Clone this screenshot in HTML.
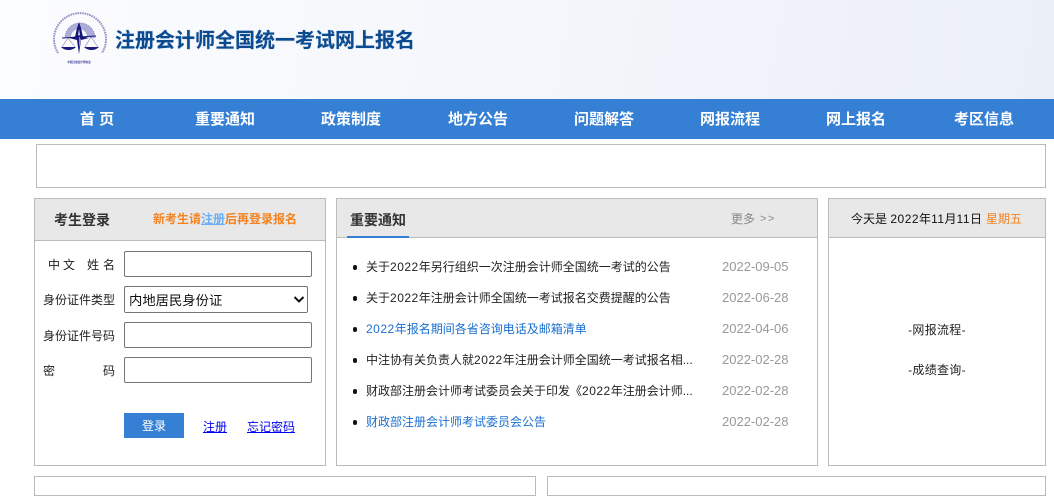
<!DOCTYPE html>
<html lang="zh">
<head>
<meta charset="utf-8">
<title>注册会计师全国统一考试网上报名</title>
<style>
html,body{margin:0;padding:0;background:#fff;}
body{width:1054px;height:478px;position:relative;overflow:hidden;font-family:"Liberation Sans","Noto Sans CJK SC",sans-serif;font-size:12px;color:#000;}
.a{position:absolute;white-space:nowrap;}
.box{position:absolute;box-sizing:border-box;border:1px solid #bbb;background:#fff;}
.head{position:absolute;box-sizing:border-box;background:#e8e8e8;border:1px solid #bbb;}
.nav{font-size:15px;font-weight:bold;color:#fff;top:110px;line-height:20px;width:100px;text-align:center;}
.lab{font-size:12px;line-height:18px;color:#222;}
.inp{position:absolute;box-sizing:border-box;left:124px;width:188px;height:26px;border:1px solid #767676;border-radius:2px;background:#fff;}
.li{left:366px;width:330px;overflow:hidden;font-size:12px;line-height:18px;color:#222;}
.li.b{color:#1a6fd0;}
.d{letter-spacing:.5px;}
.dot{position:absolute;left:352.5px;width:4.5px;height:4.5px;border-radius:50%;background:#111;}
.dt{left:722px;font-size:13px;line-height:18px;color:#999;}
</style>
</head>
<body>
<div class="a" style="left:0;top:0;width:1054px;height:99px;background:linear-gradient(100deg,#fbfcfe 0%,#f6f8fc 35%,#ebeff7 100%);"></div>
<svg class="a" style="left:51px;top:9px;" width="60" height="60" viewBox="0 0 60 60">
<rect width="60" height="60" fill="#fbfbfe"/>
<path d="M7 44A26 26 0 1 1 51 44" fill="none" stroke="#7d80c0" stroke-width="2" stroke-dasharray="1.6 .8" opacity=".85"/>
<path d="M14 29A15 15 0 0 1 44 29L36 28A8 8 0 0 0 20 28Z" fill="#9092cc" opacity=".75"/>
<path d="M14 29A15 15 0 0 1 44 29" fill="none" stroke="#7c7ec0" stroke-width=".8" stroke-dasharray="1 1"/>
<path d="M28 13L30 19L32 28L29 27L28 20L27 27L24 28L26 19Z" fill="#15157a"/>
<path d="M11 29L45 27" stroke="#1a1a80" stroke-width="1"/>
<path d="M18 29L26 27L28 26L30 27L38 29L30 31L28 45L26 31Z" fill="#15157a"/>
<path d="M28 27L30 31L28 39Z" fill="#eef" opacity=".6"/>
<path d="M17 29L11 38M17 29L24 38M40 28L34 38M40 28L47 38" stroke="#55559f" stroke-width=".5"/>
<path d="M10 38H25Q22 41 17.500 41Q13 41 10 38ZM33 38H48Q45 41 40.500 41Q36 41 33 38Z" fill="#1a1a80"/>
<text x="28" y="54" font-size="2.600" text-anchor="middle" fill="#3a3a90" font-family="Noto Sans CJK SC" font-weight="bold">中国注册会计师协会</text>
</svg>
<div class="a" style="left:115px;top:27px;font-size:20px;font-weight:bold;line-height:28px;color:#0b4a8e;text-shadow:0 0 1px rgba(60,120,190,.6);">注册会计师全国统一考试网上报名</div>

<div class="a" style="left:0;top:99px;width:1054px;height:40px;background:#3580d4;"></div>
<div class="a nav" style="left:47px;">首 页</div>
<div class="a nav" style="left:175px;">重要通知</div>
<div class="a nav" style="left:301px;">政策制度</div>
<div class="a nav" style="left:428px;">地方公告</div>
<div class="a nav" style="left:554px;">问题解答</div>
<div class="a nav" style="left:680px;">网报流程</div>
<div class="a nav" style="left:806px;">网上报名</div>
<div class="a nav" style="left:934px;">考区信息</div>

<div class="box" style="left:36px;top:144px;width:1010px;height:44px;"></div>

<!-- login -->
<div class="box" style="left:34px;top:198px;width:292px;height:268px;"></div>
<div class="head" style="left:34px;top:198px;width:292px;height:43px;"></div>
<div class="a" style="left:54px;top:210px;font-size:14px;line-height:20px;font-weight:bold;color:#333;">考生登录</div>
<div class="a" style="left:153px;top:210px;font-size:12px;line-height:18px;font-weight:bold;color:#f5821f;">新考生请<span style="color:#6aaef5;text-decoration:underline;">注册</span>后再登录报名</div>

<div class="a lab" style="left:48px;top:256px;">中</div>
<div class="a lab" style="left:63px;top:256px;">文</div>
<div class="a lab" style="left:87px;top:256px;">姓</div>
<div class="a lab" style="left:103px;top:256px;">名</div>
<div class="a lab" style="left:43px;top:291px;">身份证件类型</div>
<div class="a lab" style="left:43px;top:327px;">身份证件号码</div>
<div class="a lab" style="left:43px;top:362px;">密</div>
<div class="a lab" style="left:103px;top:362px;">码</div>

<div class="inp" style="top:251px;"></div>
<div class="inp" style="top:286px;width:184px;height:27px;"></div>
<div class="a" style="left:129px;top:291px;font-size:13.33px;line-height:19px;color:#111;">内地居民身份证</div>
<svg class="a" style="left:293px;top:295px;" width="12" height="9" viewBox="0 0 12 9"><path d="M1.500 2L6 6.500L10.500 2" fill="none" stroke="#111" stroke-width="2"/></svg>
<div class="inp" style="top:322px;"></div>
<div class="inp" style="top:357px;"></div>

<div class="a" style="left:124px;top:413px;width:60px;height:25px;background:#3580d4;color:#fff;text-align:center;font-size:12px;line-height:26px;">登录</div>
<div class="a" style="left:203px;top:418px;font-size:12px;line-height:18px;color:#00e;text-decoration:underline;">注册</div>
<div class="a" style="left:247px;top:418px;font-size:12px;line-height:18px;color:#00e;text-decoration:underline;">忘记密码</div>

<!-- notices -->
<div class="box" style="left:336px;top:198px;width:482px;height:268px;"></div>
<div class="head" style="left:336px;top:198px;width:482px;height:40px;"></div>
<div class="a" style="left:347px;top:236px;width:62px;height:2px;background:#3580d4;"></div>
<div class="a" style="left:350px;top:210px;font-size:14px;line-height:20px;font-weight:bold;color:#333;">重要通知</div>
<div class="a" style="left:731px;top:210px;font-size:12px;line-height:18px;color:#888;">更多</div>
<div class="a" style="left:760px;top:210px;font-size:11px;line-height:18px;color:#888;letter-spacing:1.500px;">&gt;&gt;</div>

<div class="dot" style="top:265px;"></div>
<div class="a li" style="top:258px;">关于<span class="d">2022</span>年另行组织一次注册会计师全国统一考试的公告</div>
<div class="a dt" style="top:258px;">2022-09-05</div>
<div class="dot" style="top:296px;"></div>
<div class="a li" style="top:289px;">关于<span class="d">2022</span>年注册会计师全国统一考试报名交费提醒的公告</div>
<div class="a dt" style="top:289px;">2022-06-28</div>
<div class="dot" style="top:327px;"></div>
<div class="a li b" style="top:320px;"><span class="d">2022</span>年报名期间各省咨询电话及邮箱清单</div>
<div class="a dt" style="top:320px;">2022-04-06</div>
<div class="dot" style="top:358px;"></div>
<div class="a li" style="top:351px;">中注协有关负责人就<span class="d">2022</span>年注册会计师全国统一考试报名相...</div>
<div class="a dt" style="top:351px;">2022-02-28</div>
<div class="dot" style="top:389px;"></div>
<div class="a li" style="top:382px;">财政部注册会计师考试委员会关于印发《<span class="d">2022</span>年注册会计师...</div>
<div class="a dt" style="top:382px;">2022-02-28</div>
<div class="dot" style="top:420px;"></div>
<div class="a li b" style="top:413px;">财政部注册会计师考试委员会公告</div>
<div class="a dt" style="top:413px;">2022-02-28</div>

<!-- date -->
<div class="box" style="left:828px;top:198px;width:218px;height:268px;"></div>
<div class="head" style="left:828px;top:198px;width:218px;height:40px;"></div>
<div class="a" style="left:851px;top:210px;font-size:12px;line-height:18px;color:#111;">今天是 <span class="d">2022</span>年<span class="d">11</span>月<span class="d">11</span>日</div>
<div class="a" style="left:986px;top:210px;font-size:12px;line-height:18px;color:#f5821f;">星期五</div>
<div class="a" style="left:828px;top:321px;width:218px;text-align:center;font-size:12px;line-height:18px;color:#222;letter-spacing:.3px;">-网报流程-</div>
<div class="a" style="left:828px;top:361px;width:218px;text-align:center;font-size:12px;line-height:18px;color:#222;letter-spacing:.3px;">-成绩查询-</div>

<!-- lower panels -->
<div class="box" style="left:34px;top:476px;width:502px;height:20px;"></div>
<div class="box" style="left:547px;top:476px;width:499px;height:20px;"></div>
</body>
</html>
